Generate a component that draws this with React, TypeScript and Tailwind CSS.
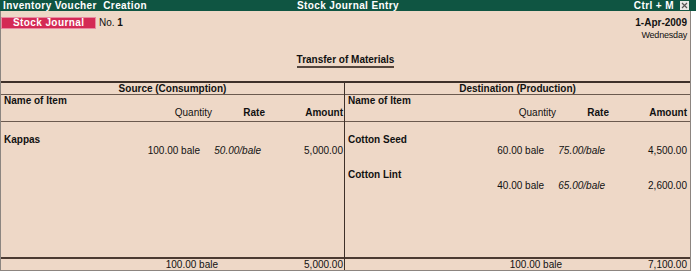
const font = { fontFamily: '"Liberation Sans", Arial, sans-serif' }

type Item = { name: string; qty: string; rate: string; amount: string }

const source: Item[] = [{ name: 'Kappas', qty: '100.00 bale', rate: '50.00/bale', amount: '5,000.00' }]
const destination: Item[] = [
  { name: 'Cotton Seed', qty: '60.00 bale', rate: '75.00/bale', amount: '4,500.00' },
  { name: 'Cotton Lint', qty: '40.00 bale', rate: '65.00/bale', amount: '2,600.00' },
]

function Side({ title, items, totalQty, totalAmount, last }: { title: string; items: Item[]; totalQty: string; totalAmount: string; last?: boolean }) {
  return (
    <div className={`flex flex-col whitespace-nowrap ${last ? '' : 'border-r border-[#3e3029]'}`}>
      <div className="h-[12px] flex items-center justify-center text-[10px] font-bold leading-none border-b border-[#6b5a4f]">{title}</div>
      <div className="border-b border-[#6b5a4f] pb-[3px]">
        <div className="h-[12px] flex items-center pl-[3px] text-[10px] font-bold leading-none">Name of Item</div>
        <div className="grid grid-cols-[151px_60px_53px_78px] h-[11px] items-center text-[10px] leading-none">
          <span />
          <span className="text-right">Quantity</span>
          <span className="text-right font-bold">Rate</span>
          <span className="text-right font-bold">Amount</span>
        </div>
      </div>
      <div className="flex-1">
        {items.map((it, i) => (
          <div key={it.name} className={i === 0 ? 'pt-[12px]' : 'pt-[13px]'}>
            <div className="h-[11px] flex items-center pl-[3px] text-[10px] font-bold leading-none">{it.name}</div>
            <div className="grid grid-cols-[141px_58px_61px_82px] h-[11px] items-center text-[10px] leading-none">
              <span />
              <span className="text-right">{it.qty}</span>
              <span className="text-right italic">{it.rate}</span>
              <span className="text-right">{it.amount}</span>
            </div>
          </div>
        ))}
      </div>
      <div className="border-t-2 border-[#4b3a31] grid grid-cols-[157px_60px_47px_78px] h-[13px] items-center text-[10px] leading-none">
        <span />
        <span className="text-right">{totalQty}</span>
        <span />
        <span className="text-right">{totalAmount}</span>
      </div>
    </div>
  )
}

export default function App() {
  return (
    <div className="w-[696px] h-[277px] bg-white text-[#111]" style={font}>
      <div className="h-[11px] bg-[#0f5542] grid grid-cols-3 items-center text-white text-[10px] font-bold leading-none tracking-[0.4px] whitespace-nowrap">
        <span className="pl-[3px] whitespace-pre">Inventory Voucher  Creation</span>
        <span className="text-center">Stock Journal Entry</span>
        <span className="flex items-center justify-end gap-[6px] pr-[7px]">
          <span className="whitespace-pre">Ctrl + M</span>
          <span className="w-[9px] h-[9px] bg-[#e7e7e7] flex items-center justify-center">
            <svg width="7" height="7" viewBox="0 0 7 7">
              <path d="M1 1L6 6M6 1L1 6" stroke="#555" strokeWidth="1.2" />
            </svg>
          </span>
        </span>
      </div>
      <div className="w-[691px] h-[260px] bg-[#eed8c7] border-l border-r border-b border-[#8c8580] flex flex-col">
        <div className="h-[70px] flex flex-col">
          <div className="flex justify-between items-start pt-[6px] pr-[3px]">
            <div className="flex items-center gap-[3px]">
              <span className="w-[95px] h-[12px] bg-[#d42a55] border border-[#e98aa2] text-white text-[10px] font-bold leading-none flex items-center pl-[11px] tracking-[0.4px]">Stock Journal</span>
              <span className="text-[10px] leading-none">No. <b>1</b></span>
            </div>
            <div className="flex flex-col items-end">
              <span className="text-[10px] font-bold leading-none mt-[1px]">1-Apr-2009</span>
              <span className="text-[9px] leading-none mt-[3px] tracking-[-0.2px]">Wednesday</span>
            </div>
          </div>
          <div className="flex justify-center mt-[15px]">
            <span className="text-[10px] font-bold leading-none pb-[1px] border-b-2 border-[#55463d]">Transfer of Materials</span>
          </div>
        </div>
        <div className="flex-1 border-t-2 border-[#3e3029] grid grid-cols-[344px_1fr]">
          <Side title="Source (Consumption)" items={source} totalQty="100.00 bale" totalAmount="5,000.00" />
          <Side title="Destination (Production)" items={destination} totalQty="100.00 bale" totalAmount="7,100.00" last />
        </div>
      </div>
    </div>
  )
}
